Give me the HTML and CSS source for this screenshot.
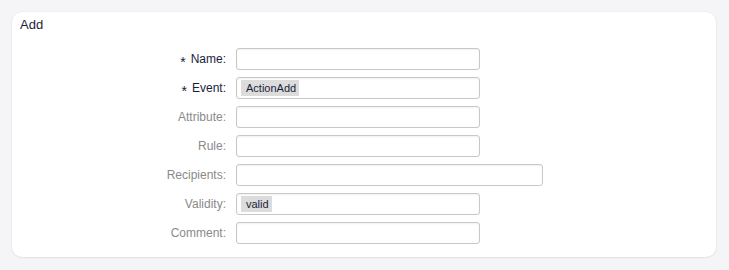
FILE: index.html
```html
<!DOCTYPE html>
<html>
<head>
<meta charset="utf-8">
<link rel="stylesheet" href="styles.css">
</head>
<body>
<div class="card">
  <div class="title">Add</div>
  <div class="form">
    <label class="lbl req"><span class="star">*</span>Name:</label>
    <div class="field"></div>
    <label class="lbl req"><span class="star">*</span>Event:</label>
    <div class="field"><span class="tag">ActionAdd</span></div>
    <label class="lbl">Attribute:</label>
    <div class="field"></div>
    <label class="lbl">Rule:</label>
    <div class="field"></div>
    <label class="lbl">Recipients:</label>
    <div class="field wide"></div>
    <label class="lbl">Validity:</label>
    <div class="field"><span class="tag">valid</span></div>
    <label class="lbl">Comment:</label>
    <div class="field"></div>
  </div>
</div>
</body>
</html>
```
FILE: styles.css
```css
html, body {
  margin: 0;
  padding: 0;
  background: #f5f5f7;
  font-family: "Liberation Sans", Arial, sans-serif;
  font-size: 12px;
}
body {
  padding: 12px 13px 13px 12px;
}
.card {
  background: #ffffff;
  border-radius: 10px;
  box-shadow: 0 0 2px rgba(0,0,0,0.08), 0 1px 2px rgba(0,0,0,0.06);
  padding: 4px 8px 14px 8px;
  height: 227px;
}
.title {
  font-size: 13px;
  color: #1b1d3a;
  line-height: 18px;
  margin-bottom: 14px;
}
.form {
  display: grid;
  grid-template-columns: 206px auto;
  column-gap: 10px;
  row-gap: 7px;
  align-items: center;
}
.lbl {
  text-align: right;
  color: #8a8a8a;
  line-height: 22px;
}
.lbl.req {
  color: #1b1d3a;
}
.star {
  display: inline-block;
  font-size: 14px;
  line-height: 10px;
  margin-right: 5px;
  position: relative;
  top: 4px;
}
.field {
  box-sizing: border-box;
  width: 244px;
  height: 22px;
  border: 1px solid #c8c8c8;
  border-radius: 3px;
  background: #fff;
  box-shadow: inset 0 1px 2px rgba(0,0,0,0.06);
  display: flex;
  align-items: center;
  padding-left: 4px;
}
.field.wide {
  width: 307px;
}
.tag {
  background: #dcdcdc;
  color: #1b1d3a;
  font-size: 11px;
  line-height: 16px;
  padding: 0 3px 0 5px;
}
```
